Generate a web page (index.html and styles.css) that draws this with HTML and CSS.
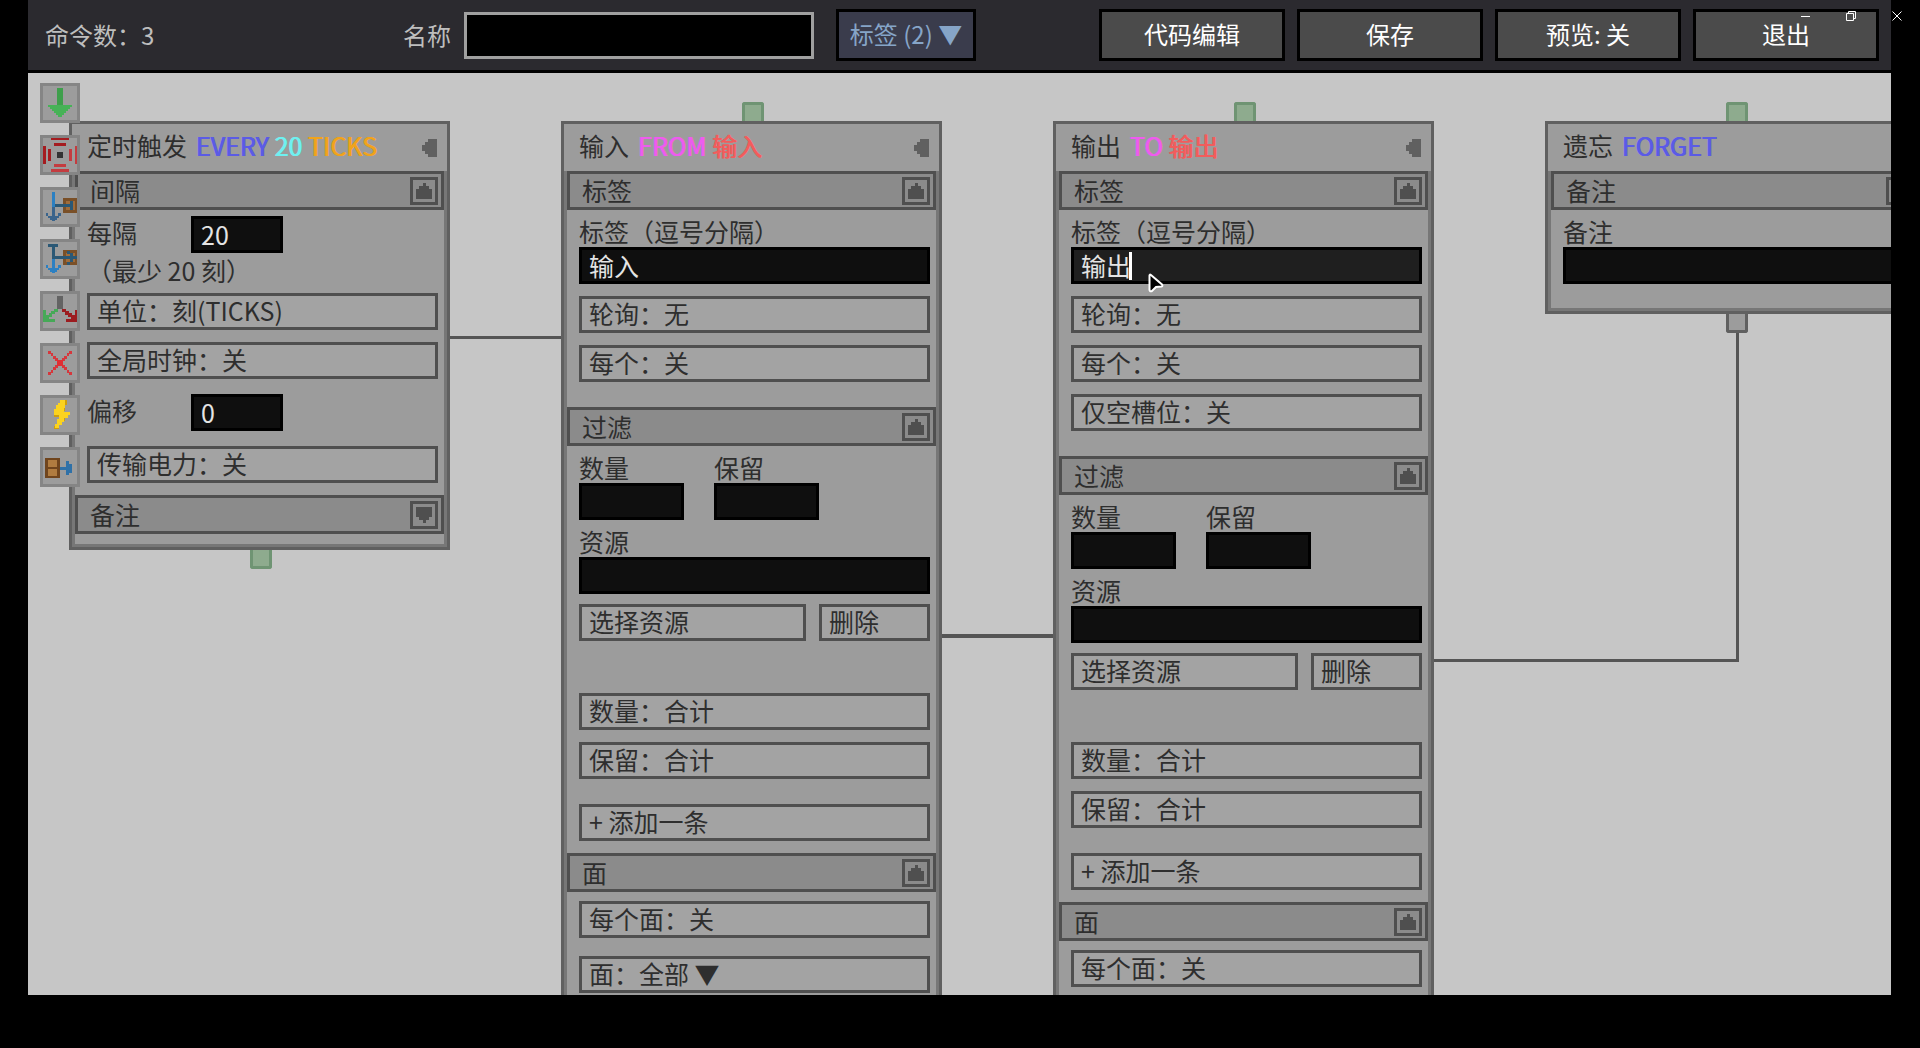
FILE: index.html
```html
<!DOCTYPE html>
<html lang="zh-CN">

<head>
    <meta charset="UTF-8">
    <meta name="viewport" content="width=device-width, initial-scale=1.0">
    <title>流程编辑器</title>
    <link rel="stylesheet" href="styles.css">
</head>

<body>
    <!-- 共用图标 -->
    <svg class="symbols" aria-hidden="true">
        <symbol id="icon-up" viewBox="0 0 16 16">
            <path d="M7 0h3v3h3v3h3v10H0V6h3V3h4z" />
        </symbol>
        <symbol id="icon-down" viewBox="0 0 16 16">
            <path d="M0 0h16v10h-3v3h-3v3H7v-3H3v-3H0z" />
        </symbol>
        <symbol id="icon-left" viewBox="0 0 15 18">
            <path d="M6 0h9v18H6v-3H3v-3H0V6h3V3h3z" />
        </symbol>
    </svg>

    <div class="window-controls">
        <button type="button" aria-label="最小化">
            <svg width="10" height="10" viewBox="0 0 10 10"><path d="M1 5.5h9" /></svg>
        </button>
        <button type="button" aria-label="还原">
            <svg width="10" height="10" viewBox="0 0 10 10"><path d="M.5 2.5h7v7h-7zM2.5 2.500V.5h7v7H7.500" /></svg>
        </button>
        <button type="button" aria-label="关闭">
            <svg width="10" height="10" viewBox="0 0 10 10"><path d="M.5.5l9 9M9.500.5l-9 9" /></svg>
        </button>
    </div>

    <div class="stage">
        <header class="topbar">
            <span class="count">命令数：3</span>
            <label for="name">名称</label>
            <input type="text" id="name" class="name-input">
            <button type="button" class="tag-button">标签 (2) ▼</button>
            <div class="actions">
                <button type="button">代码编辑</button>
                <button type="button">保存</button>
                <button type="button">预览: 关</button>
                <button type="button">退出</button>
            </div>
        </header>

        <main class="canvas">
            <svg class="wires" aria-hidden="true">
                <path d="M422 264.500H533" />
                <path class="thick" d="M914 563H1025" />
                <path d="M1406 587.500H1709.500V259" />
            </svg>

            <div class="toolbar">
                <button type="button" aria-label="触发">
                    <svg viewBox="3 3 34 34">
                        <path fill="#3f9f4c" d="M17 5h6v18h-6z" />
                        <path fill="#47b257" d="M8 22h24v2h-2v2h-2v2h-2v2h-2v2h-2v2h-4v-2h-2v-2h-2v-2h-2v-2h-2v-2H8z" />
                    </svg>
                </button>
                <button type="button" aria-label="红石触发">
                    <svg viewBox="3 3 34 34">
                        <path fill="#a51c20" d="M11 2h18v3H11zM14 8h12v3H14zM2 11h4v18H2zM8 14h3v12H8z" />
                        <path fill="#c43c40" d="M14 29h12v3H14zM11 34h18v3H11zM29 14h3v12h-3zM35 11h3v18h-3z" />
                        <path fill="#333" d="M17 17h6v6h-6z" />
                    </svg>
                </button>
                <button type="button" aria-label="输入">
                    <svg viewBox="3 3 34 34">
                        <path fill="#7a5028" d="M23 11h15v15H23z" />
                        <path fill="#a06c3a" d="M26 14h9v9h-9z" />
                        <path fill="#2b5875" d="M14 17h18v3H14zM30 14h3v9h-3z" />
                        <path fill="#2c80c2" d="M12 5h3v15h-3z" />
                        <path fill="#3a648c" d="M12 20h3v14h-3zM6 26h2v3H6zM8 29h4v2H8zM10 31h7v2h-7zM15 29h4v2h-4zM18 26h3v3h-3z" />
                    </svg>
                </button>
                <button type="button" aria-label="输出">
                    <svg viewBox="3 3 34 34">
                        <path fill="#7a5028" d="M23 11h15v15H23z" />
                        <path fill="#a06c3a" d="M26 14h9v9h-9z" />
                        <path fill="#2b5875" d="M14 17h24v3H14zM27 12h3v3h-3zM30 14h3v3h-3zM27 23h3v3h-3zM30 20h3v3h-3zM8 5h10v3H8zM12 8h3v12h-3z" />
                        <path fill="#2c80c2" d="M12 20h3v14h-3zM6 26h2v3H6zM8 29h4v2H8zM10 31h7v2h-7zM15 29h4v2h-4zM18 26h3v3h-3z" />
                    </svg>
                </button>
                <button type="button" aria-label="条件">
                    <svg viewBox="3 3 34 34">
                        <path fill="#636363" d="M17 5h6v13h-6z" />
                        <path fill="#46a957" d="M14 18h4v3h-3v2h-3v3h-3v2h6v3H3V19h3v5h3v-2h2v-2h3z" />
                        <path fill="#9c1c20" d="M22 18h4v2h3v2h3v2h3v-5h3v12H26v-3h5v-2h-3v-2h-3v-3h-3z" />
                    </svg>
                </button>
                <button type="button" aria-label="删除">
                    <svg viewBox="3 3 34 34">
                        <path fill="#d6373c" d="M8 8h3v3H8zM11 10h2v3h-2zM13 13h3v3h-3zM15 15h3v3h-3zM29 8h3v3h-3zM27 10h2v3h-2zM24 13h3v3h-3zM22 15h3v3h-3zM8 29h3v3H8zM11 27h2v3h-2zM13 24h3v3h-3zM15 22h3v3h-3zM29 29h3v3h-3zM27 27h2v3h-2zM24 24h3v3h-3zM22 22h3v3h-3z" />
                        <path fill="#e02e33" d="M17 17h6v6h-6z" />
                    </svg>
                </button>
                <button type="button" aria-label="能量">
                    <svg viewBox="3 3 34 34">
                        <path fill="#cf9f0c" d="M24 5h3v5h-2v6h-3zM14 18h6v4h-6zM20 22h5v4h-3v4h-3v4h-5v-3h4z" />
                        <path fill="#fbd31f" d="M20 5h5v8h-1v4h6v3h-2v3h-4v4h-2v3h-3v3h-4v-4h2v-5h2v-4h-5v-6h2v-4h2V8h2z" />
                    </svg>
                </button>
                <button type="button" aria-label="物品输出">
                    <svg viewBox="3 3 34 34">
                        <path fill="#70451d" d="M5 11h15v20H5z" />
                        <path fill="#b07c40" d="M8 13h9v7H8zM8 22h9v7H8z" />
                        <path fill="#2f71a8" d="M20 20h6v3h-6zM26 14h3v14h-3zM29 17h3v9h-3z" />
                    </svg>
                </button>
            </div>

            <div class="nodes">
                <section class="node">
                    <header class="node-head">
                        <h2>定时触发 <span class="code"><span class="blue">EVERY</span> <span class="cyan">20</span> <span class="orange">TICKS</span></span></h2>
                        <button type="button" class="collapse" aria-label="收起"><svg><use href="#icon-left" /></svg></button>
                    </header>
                    <div class="node-body">
                        <div class="group-head">
                            <h3>间隔</h3>
                            <button type="button" class="toggle" aria-label="收起"><svg><use href="#icon-up" /></svg></button>
                        </div>
                        <div class="group">
                            <div class="inline-field">
                                <label for="interval">每隔</label>
                                <input type="text" id="interval" value="20">
                            </div>
                            <p class="hint">（最少 20 刻）</p>
                            <button type="button" class="option">单位：刻(TICKS)</button>
                            <button type="button" class="option gap-s">全局时钟：关</button>
                            <div class="inline-field gap-xs">
                                <label for="offset">偏移</label>
                                <input type="text" id="offset" value="0">
                            </div>
                            <button type="button" class="option">传输电力：关</button>
                        </div>
                        <div class="group-head gap-s">
                            <h3>备注</h3>
                            <button type="button" class="toggle" aria-label="展开"><svg><use href="#icon-down" /></svg></button>
                        </div>
                        <div class="node-foot"></div>
                    </div>
                    <i class="port bottom"></i>
                </section>

                <section class="node">
                    <i class="port top"></i>
                    <header class="node-head">
                        <h2>输入 <span class="code"><span class="pink">FROM</span> <span class="red">输入</span></span></h2>
                        <button type="button" class="collapse" aria-label="收起"><svg><use href="#icon-left" /></svg></button>
                    </header>
                    <div class="node-body">
                        <div class="group-head">
                            <h3>标签</h3>
                            <button type="button" class="toggle" aria-label="收起"><svg><use href="#icon-up" /></svg></button>
                        </div>
                        <div class="group">
                            <label class="caption" for="in-tags">标签（逗号分隔）</label>
                            <input type="text" id="in-tags" value="输入">
                            <button type="button" class="option gap-s">轮询：无</button>
                            <button type="button" class="option gap-s">每个：关</button>
                        </div>
                        <div class="group-head gap-l">
                            <h3>过滤</h3>
                            <button type="button" class="toggle" aria-label="收起"><svg><use href="#icon-up" /></svg></button>
                        </div>
                        <div class="group">
                            <div class="amounts">
                                <div>
                                    <label class="caption" for="in-count">数量</label>
                                    <input type="text" id="in-count">
                                </div>
                                <div>
                                    <label class="caption" for="in-keep">保留</label>
                                    <input type="text" id="in-keep">
                                </div>
                            </div>
                            <label class="caption" for="in-res">资源</label>
                            <input type="text" id="in-res">
                            <div class="resource-actions">
                                <button type="button" class="option">选择资源</button>
                                <button type="button" class="option">删除</button>
                            </div>
                            <button type="button" class="option gap-xl">数量：合计</button>
                            <button type="button" class="option gap-s">保留：合计</button>
                            <button type="button" class="option gap-l">+ 添加一条</button>
                        </div>
                        <div class="group-head gap-s">
                            <h3>面</h3>
                            <button type="button" class="toggle" aria-label="收起"><svg><use href="#icon-up" /></svg></button>
                        </div>
                        <div class="group">
                            <button type="button" class="option gap-xs">每个面：关</button>
                            <button type="button" class="option gap-m">面：全部 ▼</button>
                        </div>
                        <div class="node-foot"></div>
                    </div>
                </section>

                <section class="node">
                    <i class="port top"></i>
                    <header class="node-head">
                        <h2>输出 <span class="code"><span class="pink">TO</span> <span class="red">输出</span></span></h2>
                        <button type="button" class="collapse" aria-label="收起"><svg><use href="#icon-left" /></svg></button>
                    </header>
                    <div class="node-body">
                        <div class="group-head">
                            <h3>标签</h3>
                            <button type="button" class="toggle" aria-label="收起"><svg><use href="#icon-up" /></svg></button>
                        </div>
                        <div class="group">
                            <label class="caption" for="out-tags">标签（逗号分隔）</label>
                            <div class="active-field">
                                <input type="text" id="out-tags" value="输出">
                                <i class="caret"></i>
                                <svg class="pointer" viewBox="0 0 16 20"><path d="M1.500 2.500Q1.500 1 3 2L14 11.500Q15 13 13.500 13.500L8 14L4 18Q2 19 1.500 17z" /></svg>
                            </div>
                            <button type="button" class="option gap-s">轮询：无</button>
                            <button type="button" class="option gap-s">每个：关</button>
                            <button type="button" class="option gap-s">仅空槽位：关</button>
                        </div>
                        <div class="group-head gap-l">
                            <h3>过滤</h3>
                            <button type="button" class="toggle" aria-label="收起"><svg><use href="#icon-up" /></svg></button>
                        </div>
                        <div class="group">
                            <div class="amounts">
                                <div>
                                    <label class="caption" for="out-count">数量</label>
                                    <input type="text" id="out-count">
                                </div>
                                <div>
                                    <label class="caption" for="out-keep">保留</label>
                                    <input type="text" id="out-keep">
                                </div>
                            </div>
                            <label class="caption" for="out-res">资源</label>
                            <input type="text" id="out-res">
                            <div class="resource-actions">
                                <button type="button" class="option">选择资源</button>
                                <button type="button" class="option">删除</button>
                            </div>
                            <button type="button" class="option gap-xl">数量：合计</button>
                            <button type="button" class="option gap-s">保留：合计</button>
                            <button type="button" class="option gap-l">+ 添加一条</button>
                        </div>
                        <div class="group-head gap-s">
                            <h3>面</h3>
                            <button type="button" class="toggle" aria-label="收起"><svg><use href="#icon-up" /></svg></button>
                        </div>
                        <div class="group">
                            <button type="button" class="option gap-xs">每个面：关</button>
                        </div>
                        <div class="node-foot tall"></div>
                    </div>
                </section>

                <section class="node">
                    <i class="port top"></i>
                    <header class="node-head">
                        <h2>遗忘 <span class="code"><span class="blue">FORGET</span></span></h2>
                        <button type="button" class="collapse" aria-label="收起"><svg><use href="#icon-left" /></svg></button>
                    </header>
                    <div class="node-body">
                        <div class="group-head">
                            <h3>备注</h3>
                            <button type="button" class="toggle" aria-label="收起"><svg><use href="#icon-up" /></svg></button>
                        </div>
                        <div class="group">
                            <label class="caption" for="note">备注</label>
                            <input type="text" id="note">
                        </div>
                        <div class="node-foot tall"></div>
                    </div>
                    <i class="port bottom used"></i>
                </section>
            </div>
        </main>
    </div>
</body>
</html>
```

FILE: styles.css
```css
* {
    box-sizing: border-box;
}

body {
    margin: 0;
    height: 100vh;
    background-color: #000;
    color: #2e2e2e;
    font-family: "Noto Sans CJK SC", sans-serif;
    font-size: 25px;
    line-height: 28px;
    overflow: hidden;
}

button,
input {
    margin: 0;
    font: inherit;
    color: inherit;
    border-radius: 0;
}

button {
    cursor: pointer;
    white-space: nowrap;
}

h2,
h3,
p {
    margin: 0;
    font-size: inherit;
    font-weight: normal;
}

svg {
    display: block;
}

.symbols {
    position: absolute;
    width: 0;
    height: 0;
}

.stage {
    display: flex;
    flex-direction: column;
    height: 100%;
    padding: 0 29px 53px 28px;
}

/* 窗口按钮 */
.window-controls {
    position: absolute;
    top: 11px;
    right: 18px;
    z-index: 5;
    display: flex;
    gap: 36px;
}

.window-controls button {
    padding: 0;
    border: none;
    background: none;
}

.window-controls path {
    fill: none;
    stroke: #fff;
}

/* 顶栏 */
.topbar {
    display: flex;
    align-items: center;
    flex: none;
    height: 73px;
    padding: 0 12px 0 17px;
    background-color: #2b2a2f;
    border-bottom: 3px solid #000;
    color: #bebebe;
    font-size: 24px;
}

.count {
    width: 358px;
}

.name-input {
    width: 350px;
    height: 47px;
    margin-left: 13px;
    padding: 0 8px;
    background-color: #000;
    border: 3px solid #a0a0a0;
}

.tag-button {
    width: 140px;
    height: 52px;
    margin-left: 22px;
    padding: 0 0 2px;
    background-color: #3a3c4c;
    border: 3px solid #000;
    color: #86a5c8;
}

.actions {
    display: flex;
    gap: 12px;
    margin-left: auto;
}

.actions button {
    width: 186px;
    height: 52px;
    padding: 0 0 2px;
    background-color: #4b4b4b;
    border: 3px solid #000;
    color: #fff;
}

/* 画布 */
.canvas {
    position: relative;
    flex: 1;
    min-height: 0;
    background-color: #c6c6c6;
    overflow: hidden;
}

.wires {
    position: absolute;
    top: 0;
    left: 0;
    width: 100%;
    height: 100%;
}

.wires path {
    fill: none;
    stroke: #555;
    stroke-width: 3;
}

.wires .thick {
    stroke-width: 4;
}

.toolbar {
    position: absolute;
    top: 10px;
    left: 12px;
    z-index: 2;
    display: flex;
    flex-direction: column;
    gap: 12px;
}

.toolbar button {
    width: 40px;
    height: 40px;
    padding: 0;
    background-color: #9c9c9c;
    border: 3px solid #858585;
}

.toolbar svg {
    width: 34px;
    height: 34px;
    shape-rendering: crispEdges;
}

.nodes {
    display: flex;
    align-items: flex-start;
    gap: 111px;
    padding: 48px 0 0 41px;
}

/* 节点 */
.node {
    position: relative;
    flex: none;
    width: 381px;
    background-color: #9c9c9c;
    border: 3px solid #606060;
}

.node-head {
    display: flex;
    align-items: center;
    justify-content: space-between;
    height: 47px;
    padding: 0 10px 0 15px;
}

.node-head h2 {
    padding-bottom: 6px;
    white-space: pre;
}

.code {
    margin-left: 3px;
    text-shadow: 1px 0 currentColor;
}

.code span {
    text-shadow: 1px 0 currentColor;
}

.blue {
    color: #5b5be6;
}

.cyan {
    color: #6ff0f0;
}

.orange {
    color: #f0a31c;
}

.pink {
    color: #ee5cee;
}

.red {
    color: #f25c5c;
}

.collapse {
    padding: 0;
    border: none;
    background: none;
}

.collapse svg {
    width: 15px;
    height: 18px;
    fill: #606060;
}

.node-body {
    border: solid #777;
    border-width: 0 3px 3px;
}

.group-head {
    display: flex;
    align-items: center;
    justify-content: space-between;
    height: 39px;
    padding: 0 3px 0 12px;
    background-color: #8b8b8b;
    border: 3px solid #4f4f4f;
}

.group-head h3 {
    padding-bottom: 2px;
}

.toggle {
    width: 28px;
    height: 28px;
    padding: 3px;
    background: none;
    border: 3px solid #4f4f4f;
}

.toggle svg {
    width: 16px;
    height: 16px;
    fill: #4f4f4f;
}

.group {
    padding: 0 6px 0 12px;
}

.group input {
    display: block;
    width: 100%;
    height: 37px;
    padding: 0 7px 2px;
    background-color: #0f0f0f;
    border: 3px solid #000;
    color: #e4e4e4;
    outline: none;
}

.caption {
    display: block;
    height: 37px;
    padding-top: 7px;
}

.option {
    display: block;
    width: 100%;
    height: 37px;
    padding: 0 7px 3px;
    background-color: #a3a3a3;
    border: 3px solid #4f4f4f;
    line-height: 28px;
    text-align: left;
}

.inline-field {
    display: flex;
    align-items: center;
    padding-top: 6px;
}

.inline-field label {
    width: 104px;
    padding-bottom: 5px;
}

.group .inline-field input {
    width: 92px;
}

.inline-field + .option {
    margin-top: 15px;
}

.hint {
    height: 40px;
    padding-top: 3px;
}

.amounts {
    display: flex;
    gap: 30px;
}

.amounts div {
    width: 105px;
}

.resource-actions {
    display: grid;
    grid-template-columns: 227px 1fr;
    gap: 13px;
    margin-top: 10px;
}

.active-field {
    position: relative;
}

.active-field input {
    background-color: #1f1f1f;
}

.caret {
    position: absolute;
    top: 5px;
    left: 58px;
    width: 3px;
    height: 28px;
    background-color: #fff;
}

.pointer {
    position: absolute;
    top: 26px;
    left: 77px;
    width: 16px;
    height: 20px;
    fill: #000;
    stroke: #fff;
    stroke-width: 2;
}

.gap-xs {
    margin-top: 9px;
}

.gap-s {
    margin-top: 12px;
}

.gap-m {
    margin-top: 18px;
}

.gap-l {
    margin-top: 25px;
}

.gap-xl {
    margin-top: 52px;
}

.node-foot {
    height: 10px;
}

.node-foot.tall {
    height: 24px;
}

/* 连接点 */
.port {
    position: absolute;
    left: 178px;
    width: 22px;
    height: 19px;
    background-color: #8eab8e;
    border: 3px solid #6f9473;
}

.port.top {
    bottom: 100%;
    margin-bottom: 3px;
    border-bottom: none;
    border-radius: 3px 3px 0 0;
}

.port.bottom {
    top: 100%;
    margin-top: 3px;
    border-top: none;
    border-radius: 0 0 3px 3px;
}

.port.used {
    background-color: #9c9c9c;
    border-color: #606060;
}
```
